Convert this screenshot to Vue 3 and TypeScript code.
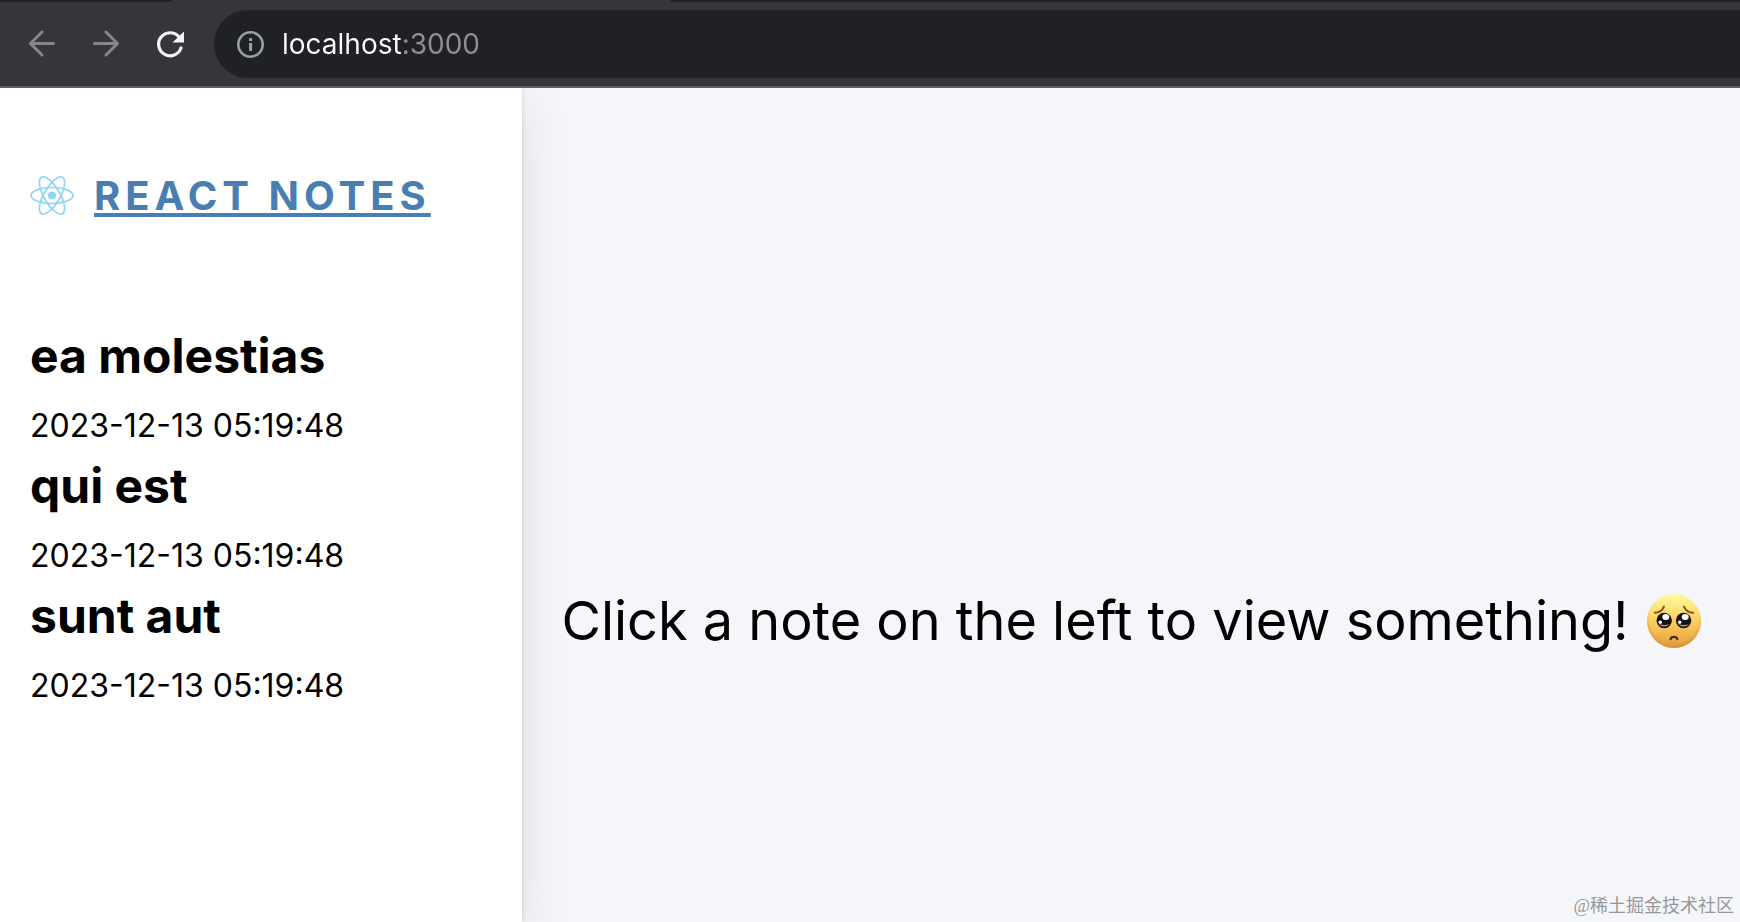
<script setup lang="ts">
import { ref } from 'vue'

interface Note {
  id: number
  title: string
  updated: string
}

const address = ref('localhost:3000')

const notes: Note[] = [
  { id: 1, title: 'ea molestias', updated: '2023-12-13 05:19:48' },
  { id: 2, title: 'qui est', updated: '2023-12-13 05:19:48' },
  { id: 3, title: 'sunt aut', updated: '2023-12-13 05:19:48' },
]
</script>

<template>
  <div class="window">
    <div class="tab-strip">
      <span class="tab-edge tab-before"></span>
      <span class="tab-edge tab-after"></span>
    </div>
    <header class="toolbar">
      <nav class="controls" aria-label="Browser controls">
        <button class="control" type="button" aria-label="Back" disabled>
          <svg viewBox="0 0 32 32" fill="none" stroke="#86878b" stroke-width="3" stroke-linecap="round" stroke-linejoin="round">
            <path d="M27.5 15.5H4.5M16 4L4.5 15.5L16 27" />
          </svg>
        </button>
        <button class="control" type="button" aria-label="Forward" disabled>
          <svg viewBox="0 0 32 32" fill="none" stroke="#86878b" stroke-width="3" stroke-linecap="round" stroke-linejoin="round">
            <path d="M4.5 15.5H27.5M16 4L27.5 15.5L16 27" />
          </svg>
        </button>
        <button class="control" type="button" aria-label="Reload">
          <svg viewBox="0 0 32 32">
            <path d="M27 20A11.5 11.5 0 1 1 24.5 8.4" fill="none" stroke="#f1f3f4" stroke-width="3.2" stroke-linecap="round" />
            <path d="M30 3.5V14.5H18.5Z" fill="#f1f3f4" />
          </svg>
        </button>
      </nav>
      <form class="omnibox" @submit.prevent>
        <svg class="info" viewBox="0 0 28 28" aria-hidden="true">
          <circle cx="14.5" cy="14.5" r="12.2" fill="none" stroke="#9aa0a6" stroke-width="2.6" />
          <path d="M13.1 8h3v3h-3zM13.1 13h3v8h-3z" fill="#9aa0a6" />
        </svg>
        <input v-model="address" class="address" type="text" aria-label="Address" spellcheck="false" />
      </form>
    </header>

    <div class="page">
      <aside class="sidebar">
        <div class="brand">
          <svg class="logo" viewBox="0 0 44 40" aria-hidden="true" fill="none" stroke="#92d6f2" stroke-width="1.7">
            <ellipse cx="22" cy="19.5" rx="21" ry="8" />
            <ellipse cx="22" cy="19.5" rx="21" ry="8" transform="rotate(60 22 19.5)" />
            <ellipse cx="22" cy="19.5" rx="21" ry="8" transform="rotate(120 22 19.5)" />
            <circle cx="22" cy="19.5" r="4" fill="#92d6f2" stroke="none" />
          </svg>
          <a class="brand-link" href="/">REACT NOTES</a>
        </div>
        <ul class="notes">
          <li v-for="note in notes" :key="note.id" class="note">
            <strong class="note-title">{{ note.title }}</strong>
            <time class="note-time">{{ note.updated }}</time>
          </li>
        </ul>
      </aside>

      <main class="content">
        <p class="empty">
          <span>Click a note on the left to view something!</span>
          <svg class="face" viewBox="0 0 54 54" role="img" aria-label="Pleading face">
            <defs>
              <linearGradient id="skin" x1="0" y1="0" x2="0" y2="1">
                <stop offset="0" stop-color="#fffaa0" />
                <stop offset="0.35" stop-color="#fbdf72" />
                <stop offset="0.75" stop-color="#f2b54e" />
                <stop offset="1" stop-color="#e39a3d" />
              </linearGradient>
              <radialGradient id="rim" cx="0.5" cy="0.45" r="0.56">
                <stop offset="0.8" stop-color="#d98a2b" stop-opacity="0" />
                <stop offset="1" stop-color="#d07f2a" stop-opacity="0.55" />
              </radialGradient>
            </defs>
            <circle cx="27" cy="27" r="27" fill="url(#skin)" />
            <circle cx="27" cy="27" r="27" fill="url(#rim)" />
            <path d="M7.8 18.8Q14.6 18.4 17 12.6M37 12.6Q39.4 18.4 46.2 18.8" fill="none" stroke="#8c4c12" stroke-width="1.9" stroke-linecap="round" />
            <circle cx="17.2" cy="26.5" r="7.7" fill="#181210" />
            <circle cx="36.6" cy="26.5" r="7.7" fill="#181210" />
            <path d="M11.6 30Q17 35 22.8 30Q17.2 32 11.6 30M31 30Q36.4 35 42.2 30Q36.6 32 31 30" fill="#aaa39e" />
            <ellipse cx="18.8" cy="23" rx="3.5" ry="2.9" fill="#fff" />
            <ellipse cx="38.2" cy="23" rx="3.5" ry="2.9" fill="#fff" />
            <circle cx="13.3" cy="28.3" r="1.7" fill="#fff" />
            <circle cx="32.7" cy="28.3" r="1.7" fill="#fff" />
            <path d="M23.7 45Q24.2 42.9 27 42.9T30.3 45" fill="none" stroke="#4d2708" stroke-width="2.3" stroke-linecap="round" />
          </svg>
        </p>
        <span class="credit">@稀土掘金技术社区</span>
      </main>
    </div>
  </div>
</template>

<style>
body {
  margin: 0;
}
</style>

<style scoped>
.window {
  display: flex;
  flex-direction: column;
  min-height: 100vh;
  font-family: Inter, "Liberation Sans", sans-serif;
  color: #000;
}

.tab-strip {
  display: flex;
  justify-content: space-between;
  height: 2px;
  background: #35363a;
}

.tab-edge {
  background: #202124;
}

.tab-before {
  width: 172px;
  border-bottom-right-radius: 6px 2px;
}

.tab-after {
  flex: 1;
  margin-left: 498px;
  border-bottom-left-radius: 6px 2px;
}

.toolbar {
  display: flex;
  align-items: center;
  padding: 8px 0 8px 26px;
  background: #35363a;
  border-bottom: 2px solid #5f6065;
}

.controls {
  display: flex;
  gap: 32px;
  margin-right: 28px;
}

.control {
  display: flex;
  padding: 0;
  border: 0;
  background: none;
}

.control svg {
  width: 32px;
  height: 32px;
}

.omnibox {
  display: flex;
  flex: 1;
  align-items: center;
  gap: 18px;
  height: 68px;
  padding-left: 22px;
  background: #202124;
  border-radius: 34px 0 0 34px;
}

.info {
  width: 28px;
  height: 28px;
}

.address {
  flex: 1;
  padding: 0;
  border: 0;
  outline: 0;
  font: 28px/36px Inter, "Liberation Sans", sans-serif;
  color: transparent;
  background: linear-gradient(to right, #fff 122px, #8f9093 122px);
  background-clip: text;
}

.page {
  display: flex;
  flex: 1;
}

.sidebar {
  z-index: 1;
  box-sizing: border-box;
  width: 30%;
  padding: 84px 30px 0;
  background: #fff;
  box-shadow: 0 16px 48px rgba(0, 0, 0, 0.1), 0 0 4px rgba(0, 0, 0, 0.16);
  clip-path: inset(0 -80px 0 0);
}

.brand {
  display: flex;
  align-items: center;
  gap: 20px;
}

.logo {
  width: 44px;
  height: 40px;
}

.brand-link {
  font-size: 40px;
  font-weight: 700;
  line-height: 48px;
  letter-spacing: 5px;
  white-space: nowrap;
  color: #487eb0;
  text-decoration-thickness: 4px;
  text-underline-offset: 3px;
  text-decoration-skip-ink: none;
}

.notes {
  display: flex;
  flex-direction: column;
  gap: 4px;
  margin: 104px 0 0;
  padding: 0;
  list-style: none;
}

.note {
  display: flex;
  flex-direction: column;
  gap: 14px;
}

.note-title {
  font-size: 48px;
  font-weight: 700;
  line-height: 64px;
}

.note-time {
  font-size: 32px;
  line-height: 48px;
}

.content {
  display: flex;
  flex: 1;
  flex-direction: column;
  justify-content: space-between;
  background: #f5f6fa;
}

.empty {
  display: flex;
  align-items: center;
  justify-content: center;
  gap: 18px;
  margin: 499px 0 0;
  font-size: 54px;
  line-height: 68px;
  white-space: nowrap;
}

.face {
  width: 54px;
  height: 54px;
}

.credit {
  align-self: flex-end;
  padding: 0 6px 4px 0;
  font: 18px/24px "Liberation Serif", "Noto Sans CJK SC", serif;
  color: #96979b;
}
</style>
